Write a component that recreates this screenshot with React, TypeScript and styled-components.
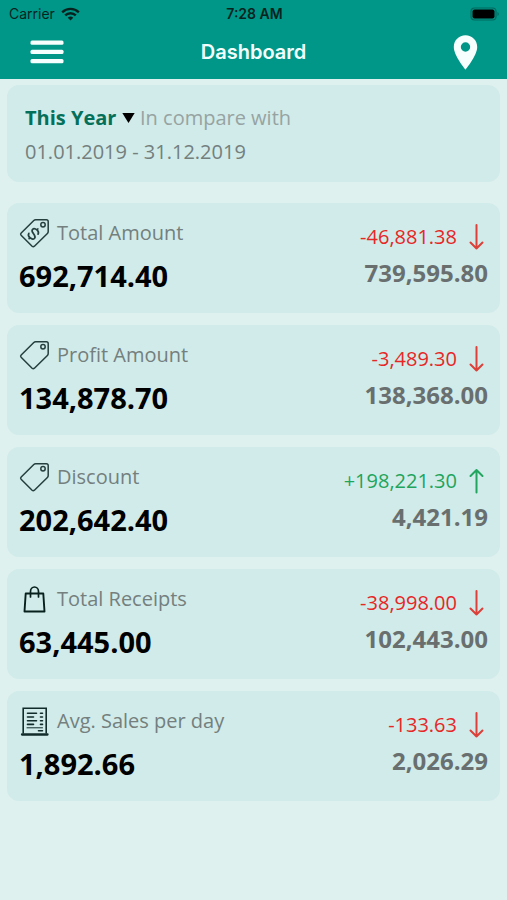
import React from "react";
import styled, { createGlobalStyle } from "styled-components";

const GlobalStyle = createGlobalStyle`
  *, *::before, *::after { box-sizing: border-box; }
  body {
    margin: 0;
    background: #dff1ef;
    font-family: "Open Sans", "Noto Sans", sans-serif;
  }
  h1, h2, p { margin: 0; }
`;

const Header = styled.header`
  background: #009788;
  height: 79px;
  font-family: Inter, sans-serif;
`;

const StatusBar = styled.div`
  display: grid;
  grid-template-columns: 1fr auto 1fr;
  align-items: center;
  height: 27px;
  padding: 0 7px 0 9px;
  font-size: 14px;
  color: #06231f;
`;

const Carrier = styled.div`
  display: flex;
  align-items: center;
  gap: 6px;
`;

const Clock = styled.time`
  font-weight: 600;
`;

const BatterySlot = styled.div`
  display: flex;
  justify-content: flex-end;
`;

const NavBar = styled.nav`
  display: grid;
  grid-template-columns: 1fr auto 1fr;
  align-items: center;
  height: 50px;
  padding: 0 24px;
`;

const Title = styled.h1`
  font-size: 20px;
  line-height: 24px;
  font-weight: 600;
  color: #f4fffd;
`;

const IconButton = styled.button<{ $end?: boolean }>`
  display: flex;
  justify-self: ${(p) => (p.$end ? "end" : "start")};
  padding: 0 ${(p) => (p.$end ? 5 : 6)}px;
  border: 0;
  background: none;
  color: #f6fffe;
  cursor: pointer;
`;

const Content = styled.main`
  padding: 6px 7px;
`;

const Card = styled.section`
  background: #d0ebe9;
  border-radius: 12px;
`;

const PeriodCard = styled(Card)`
  height: 97px;
  padding: 16px 18px;
  font-size: 20px;
  line-height: 34px;
  color: #747f7e;
`;

const PeriodRow = styled.div`
  display: flex;
  align-items: center;
  gap: 5px;
  height: 34px;
`;

const PeriodPicker = styled.label`
  display: flex;
  align-items: center;
  gap: 5px;
`;

const PeriodSelect = styled.select`
  appearance: none;
  padding: 0;
  border: 0;
  background: none;
  font: inherit;
  font-weight: 700;
  color: #05705a;
  cursor: pointer;
`;

const Muted = styled.span`
  color: #97a3a2;
`;

const MetricList = styled.div`
  display: grid;
  gap: 12px;
  margin-top: 21px;
`;

const MetricCard = styled(Card)`
  display: flex;
  justify-content: space-between;
  height: 110px;
  padding: 14px 12px;
`;

const MetricHead = styled.div`
  display: flex;
  align-items: center;
  gap: 7px;
  height: 32px;
`;

const MetricName = styled.h2`
  font-size: 20px;
  line-height: 32px;
  font-weight: 400;
  color: #747f7e;
`;

const MetricValue = styled.p`
  margin-top: 7px;
  font-size: 29px;
  line-height: 40px;
  font-weight: 700;
  color: #000;
`;

const Compare = styled.div`
  display: flex;
  flex-direction: column;
  align-items: flex-end;
  padding-top: 4px;
`;

const Delta = styled.div<{ $up: boolean }>`
  display: flex;
  align-items: center;
  gap: 12px;
  padding-right: 4px;
  font-size: 20px;
  line-height: 32px;
  color: ${(p) => (p.$up ? "#1fa45b" : "#e62726")};
`;

const Previous = styled.p`
  margin-top: 3px;
  font-size: 24px;
  line-height: 34px;
  font-weight: 700;
  color: #696f6f;
`;

const WifiIcon = () => (
  <svg width="19" height="14" viewBox="0 0 19 14" fill="none" stroke="currentColor" strokeWidth="2.4" aria-hidden="true">
    <path d="M1.2 5.3a11.8 11.8 0 0 1 16.6 0" />
    <path d="M4.2 8.4a7.5 7.5 0 0 1 10.6 0" />
    <path d="M6.7 10.8a4 4 0 0 1 5.6 0L9.5 13.6z" fill="currentColor" stroke="none" />
  </svg>
);

const BatteryIcon = () => (
  <svg width="30" height="14" viewBox="0 0 30 14" aria-hidden="true">
    <rect x="1" y="1" width="25" height="12" rx="3.5" fill="none" stroke="#00695f" strokeWidth="1.2" />
    <rect x="2.5" y="2.5" width="22" height="9" rx="2" fill="#000" />
    <path d="M27.5 5v4a2.2 2.2 0 0 0 0-4z" fill="#00695f" />
  </svg>
);

const MenuIcon = () => (
  <svg width="34" height="24" viewBox="0 0 34 24" fill="currentColor" aria-hidden="true">
    <rect x="0.5" y="0.5" width="33" height="4.2" rx="1.5" />
    <rect x="0.5" y="9.8" width="33" height="4.2" rx="1.5" />
    <rect x="0.5" y="19" width="33" height="4.2" rx="1.5" />
  </svg>
);

const PinIcon = () => (
  <svg width="25" height="35" viewBox="0 0 25 35" fill="currentColor" aria-hidden="true">
    <path
      fillRule="evenodd"
      d="M12.5.3C5.9.3.8 5.4.8 12c0 8.600 11.700 22.600 11.700 22.600S24.200 20.600 24.200 12C24.200 5.400 19.100.3 12.500.3zm0 7a4.700 4.700 0 1 1 0 9.400 4.700 4.700 0 0 1 0-9.400z"
    />
  </svg>
);

const CaretIcon = () => (
  <svg width="13" height="10" viewBox="0 0 13 10" aria-hidden="true">
    <path d="M.3 0h12.400L6.500 10z" fill="#000" />
  </svg>
);

const TagIcon = ({ dollar = false }: { dollar?: boolean }) => (
  <svg width="31" height="32" viewBox="0 0 31 32" fill="none" stroke="#253f3e" strokeWidth="1.5" strokeLinejoin="round" strokeLinecap="round" aria-hidden="true">
    <path d="M16.600 2.700H27.400q1.800 0 1.800 1.800V14.500q0 1.200-.8 2L15.400 29.200q-1.200 1-2.300 0L2.100 18.200q-1-1.100.1-2.200L14.800 3.500q.8-.8 1.800-.8z" />
    <circle cx="24" cy="7.700" r="2.200" />
    {dollar && (
      <g transform="translate(14.500 16.800) rotate(42) scale(1.150)">
        <path d="M3.200-2.400C2.800-3.900 1.500-4.500 0-4.500c-1.800 0-3.200.9-3.200 2.300C-3.200.9 3.300-.9 3.300 2.200 3.300 3.700 1.900 4.600 0 4.600c-1.800 0-3-.8-3.300-2.200M0-5.600v1.100M0 4.600v1.100" strokeWidth="1.500" />
      </g>
    )}
  </svg>
);

const BagIcon = () => (
  <svg width="31" height="32" viewBox="0 0 31 32" fill="none" stroke="#07201e" strokeWidth="1.900" strokeLinejoin="round" strokeLinecap="round" aria-hidden="true">
    <path d="M6.700 10.500h17.600l1.200 18H5.500z" />
    <path d="M11.500 14V8.500a4 4.500 0 0 1 8 0V14" strokeWidth="1.700" />
  </svg>
);

const ReceiptIcon = () => (
  <svg width="31" height="32" viewBox="0 0 31 32" fill="none" stroke="#102b2a" strokeWidth="1.600" strokeLinecap="round" aria-hidden="true">
    <path d="M4.200 28V3.200h23V28" />
    <path d="M3 29.500h25.500" strokeWidth="2.300" />
    <path d="M8.500 8.200h9M8.500 12h6M8.500 15.800h9M8.500 19.400h6M21.500 8.200h2M21.500 12h2M21.500 15.800h2M21.500 19.400h2M19.500 25.800h4" strokeWidth="1.600" />
    <path d="M8 22.800h15.500" strokeWidth="1" />
  </svg>
);

const ArrowIcon = ({ up }: { up: boolean }) => (
  <svg width="15" height="26" viewBox="0 0 15 26" fill="none" stroke={up ? "#22a55f" : "#dc4038"} strokeWidth="2" strokeLinecap="round" strokeLinejoin="round" role="img" aria-label={up ? "Up" : "Down"}>
    <path d={up ? "M7.500 24.500V2M1.500 8l6-6 6 6" : "M7.500 1v23.500M1.500 18.500l6 6 6-6"} />
  </svg>
);

interface Metric {
  name: string;
  value: string;
  delta: string;
  previous: string;
  icon: React.ReactNode;
}

const metrics: Metric[] = [
  { name: "Total Amount", value: "692,714.40", delta: "-46,881.38", previous: "739,595.80", icon: <TagIcon dollar /> },
  { name: "Profit Amount", value: "134,878.70", delta: "-3,489.30", previous: "138,368.00", icon: <TagIcon /> },
  { name: "Discount", value: "202,642.40", delta: "+198,221.30", previous: "4,421.19", icon: <TagIcon /> },
  { name: "Total Receipts", value: "63,445.00", delta: "-38,998.00", previous: "102,443.00", icon: <BagIcon /> },
  { name: "Avg. Sales per day", value: "1,892.66", delta: "-133.63", previous: "2,026.29", icon: <ReceiptIcon /> },
];

export default function App() {
  return (
    <>
      <GlobalStyle />
      <Header>
        <StatusBar>
          <Carrier>
            Carrier
            <WifiIcon />
          </Carrier>
          <Clock>7:28 AM</Clock>
          <BatterySlot>
            <BatteryIcon />
          </BatterySlot>
        </StatusBar>
        <NavBar>
          <IconButton type="button" aria-label="Menu">
            <MenuIcon />
          </IconButton>
          <Title>Dashboard</Title>
          <IconButton type="button" aria-label="Location" $end>
            <PinIcon />
          </IconButton>
        </NavBar>
      </Header>
      <Content>
        <PeriodCard>
          <PeriodRow>
            <PeriodPicker>
              <PeriodSelect aria-label="Period">
                <option>This Year</option>
              </PeriodSelect>
              <CaretIcon />
            </PeriodPicker>
            <Muted>In compare with</Muted>
          </PeriodRow>
          <p>01.01.2019 - 31.12.2019</p>
        </PeriodCard>
        <MetricList>
          {metrics.map((m) => {
            const up = m.delta.startsWith("+");
            return (
              <MetricCard key={m.name}>
                <div>
                  <MetricHead>
                    {m.icon}
                    <MetricName>{m.name}</MetricName>
                  </MetricHead>
                  <MetricValue>{m.value}</MetricValue>
                </div>
                <Compare>
                  <Delta $up={up}>
                    {m.delta}
                    <ArrowIcon up={up} />
                  </Delta>
                  <Previous>{m.previous}</Previous>
                </Compare>
              </MetricCard>
            );
          })}
        </MetricList>
      </Content>
    </>
  );
}
